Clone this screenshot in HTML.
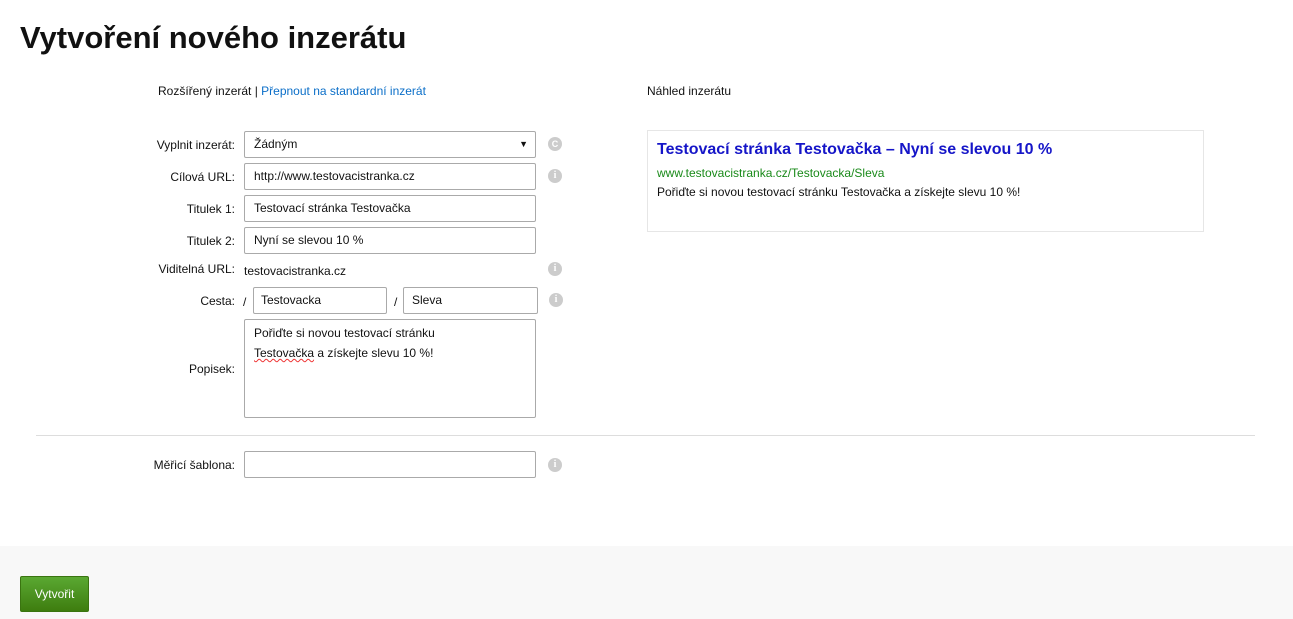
<!DOCTYPE html>
<html><head><meta charset="utf-8"><style>
*{box-sizing:border-box;margin:0;padding:0}
body{width:1293px;height:619px;position:relative;background:#fff;font-family:"Liberation Sans",Arial,sans-serif;font-size:12px;color:#111;overflow:hidden}
.a{position:absolute;white-space:nowrap}
.lbl{position:absolute;right:1058px;text-align:right;white-space:nowrap}
.in{position:absolute;border:1px solid #aaa;border-radius:2px;background:#fff;padding-left:9px;line-height:24px;white-space:nowrap}
.ic{position:absolute;width:14px;height:14px;border-radius:50%;background:#ccc;color:#fff;font-size:10px;font-weight:bold;text-align:center;line-height:14px;font-family:"Liberation Serif",serif}
</style></head><body>
<div class="a" style="left:20px;top:20px;font-size:31px;font-weight:bold;">Vytvoření nového inzerátu</div>
<div class="a" style="left:158px;top:84px;">Rozšířený inzerát | <span style="color:#0a6ec8">Přepnout na standardní inzerát</span></div>
<div class="a" style="left:647px;top:84px;">Náhled inzerátu</div>

<div class="lbl" style="top:138px;">Vyplnit inzerát:</div>
<div class="in" style="left:244px;top:131px;width:292px;height:27px;">Žádným<span style="position:absolute;right:7px;font-size:9px;">▼</span></div>
<div class="ic" style="left:548px;top:137px;font-family:'Liberation Sans';font-size:9px;">C</div>

<div class="lbl" style="top:170px;">Cílová URL:</div>
<div class="in" style="left:244px;top:163px;width:292px;height:27px;">http://www.testovacistranka.cz</div>
<div class="ic" style="left:548px;top:169px;">i</div>

<div class="lbl" style="top:202px;">Titulek 1:</div>
<div class="in" style="left:244px;top:195px;width:292px;height:27px;">Testovací stránka Testovačka</div>

<div class="lbl" style="top:234px;">Titulek 2:</div>
<div class="in" style="left:244px;top:227px;width:292px;height:27px;">Nyní se slevou 10 %</div>

<div class="lbl" style="top:262px;">Viditelná URL:</div>
<div class="a" style="left:244px;top:264px;">testovacistranka.cz</div>
<div class="ic" style="left:548px;top:262px;">i</div>

<div class="lbl" style="top:294px;">Cesta:</div>
<div class="a" style="left:243px;top:295px;">/</div>
<div class="in" style="left:253px;top:287px;width:134px;height:27px;padding-left:7px;">Testovacka</div>
<div class="a" style="left:394px;top:295px;">/</div>
<div class="in" style="left:403px;top:287px;width:135px;height:27px;padding-left:8px;">Sleva</div>
<div class="ic" style="left:549px;top:293px;">i</div>

<div class="lbl" style="top:362px;">Popisek:</div>
<div class="in" style="left:244px;top:319px;width:292px;height:99px;line-height:20px;padding-top:3px;white-space:normal;">Pořiďte si novou testovací stránku<br><span style="text-decoration:underline wavy #e33;text-decoration-thickness:1px;">Testovačka</span> a získejte slevu 10 %!</div>

<div class="a" style="left:36px;top:435px;width:1219px;height:1px;background:#ddd;"></div>

<div class="lbl" style="top:458px;">Měřicí šablona:</div>
<div class="in" style="left:244px;top:451px;width:292px;height:27px;"></div>
<div class="ic" style="left:548px;top:458px;">i</div>

<div class="a" style="left:647px;top:130px;width:557px;height:102px;border:1px solid #e6e6e6;">
<div class="a" style="left:9px;top:10px;font-size:16px;font-weight:bold;color:#1a0dab;color:#1515c8;">Testovací stránka Testovačka – Nyní se slevou 10 %</div>
<div class="a" style="left:9px;top:35px;color:#1a8a1a;">www.testovacistranka.cz/Testovacka/Sleva</div>
<div class="a" style="left:9px;top:54px;">Pořiďte si novou testovací stránku Testovačka a získejte slevu 10 %!</div>
</div>

<div class="a" style="left:0;top:546px;width:1293px;height:73px;background:#f8f8f8;"></div>
<div class="a" style="left:20px;top:576px;width:69px;height:36px;border-radius:2px;background:linear-gradient(#5aa832,#3e7d0f);border:1px solid #3a7410;color:#fff;text-align:center;line-height:34px;font-size:12px;">Vytvořit</div>
</body></html>
